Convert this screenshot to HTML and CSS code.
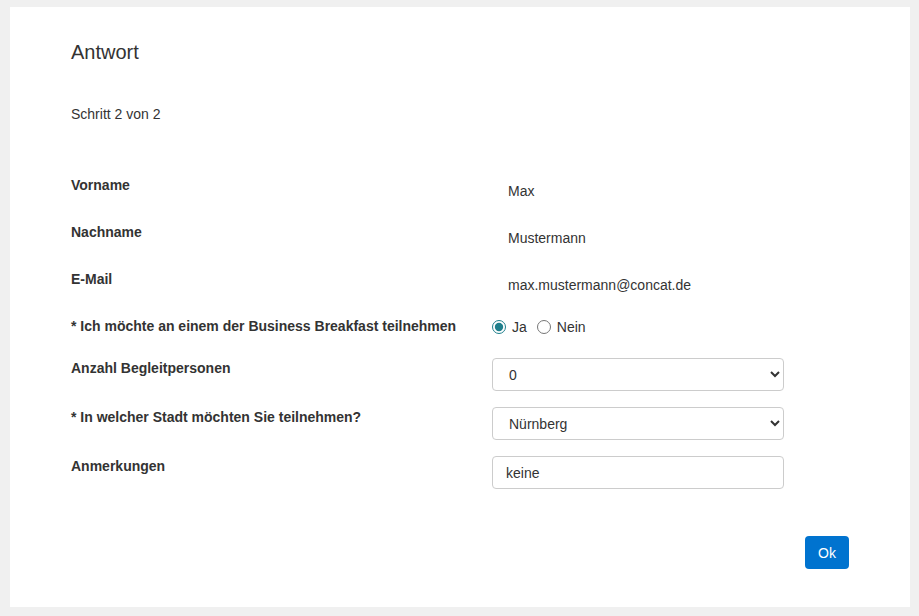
FILE: index.html
```html
<!DOCTYPE html>
<html lang="de">
<head>
    <meta charset="UTF-8">
    <meta name="viewport" content="width=device-width, initial-scale=1.0">
    <title>Antwort</title>
    <link rel="stylesheet" href="styles.css">
</head>
<body>
    <div class="panel">
        <h1>Antwort</h1>
        <p class="step">Schritt 2 von 2</p>

        <form class="answer-form">
            <div class="row">
                <div class="label">Vorname</div>
                <div class="value">Max</div>
            </div>
            <div class="row">
                <div class="label">Nachname</div>
                <div class="value">Mustermann</div>
            </div>
            <div class="row">
                <div class="label">E-Mail</div>
                <div class="value">max.mustermann@concat.de</div>
            </div>
            <div class="row row-radio">
                <div class="label">* Ich möchte an einem der Business Breakfast teilnehmen</div>
                <div class="radios">
                    <label><input type="radio" name="teilnahme" checked> Ja</label>
                    <label><input type="radio" name="teilnahme"> Nein</label>
                </div>
            </div>
            <div class="row row-field">
                <div class="label">Anzahl Begleitpersonen</div>
                <select class="field">
                    <option>0</option>
                    <option>1</option>
                    <option>2</option>
                </select>
            </div>
            <div class="row row-field">
                <div class="label">* In welcher Stadt möchten Sie teilnehmen?</div>
                <select class="field">
                    <option>Nürnberg</option>
                    <option>München</option>
                </select>
            </div>
            <div class="row row-field">
                <div class="label">Anmerkungen</div>
                <input class="field text-field" type="text" value="keine">
            </div>

            <div class="actions">
                <button type="button" class="ok-btn">Ok</button>
            </div>
        </form>
    </div>
</body>
</html>
```

FILE: styles.css
```css
body {
    margin: 0;
    padding: 7px 10px;
    background: #f0f0f0;
    font-family: "Liberation Sans", Arial, sans-serif;
    font-size: 14px;
    color: #333;
}

.panel {
    width: 900px;
    box-sizing: border-box;
    background: white;
    padding: 33px 61px 38px;
}

h1 {
    margin: 0;
    font-size: 20px;
    font-weight: normal;
    line-height: 24px;
}

.step {
    margin: 40px 0 0;
    line-height: 20px;
}

.answer-form {
    margin-top: 51px;
}

.row {
    display: grid;
    grid-template-columns: 421px 292px;
    align-items: start;
    height: 33px;
    margin-bottom: 14px;
}

.row-radio {
    height: 28px;
}

.row-field {
    margin-bottom: 16px;
}

.label {
    font-weight: bold;
    line-height: 20px;
}

.value {
    padding-left: 16px;
    line-height: 33px;
}

.radios {
    display: flex;
    gap: 10px;
    line-height: 20px;
    padding-top: 1px;
}

.radios label {
    display: flex;
    align-items: center;
    gap: 6px;
}

.radios input {
    margin: 0;
    width: 14px;
    height: 14px;
    accent-color: #1f7f8c;
}

.field {
    width: 292px;
    height: 33px;
    box-sizing: border-box;
    border: 1px solid #ccc;
    border-radius: 4px;
    background: white;
    font-family: inherit;
    font-size: 14px;
    color: #333;
    padding: 0 12px;
}

.text-field {
    padding: 0 13px;
}

.actions {
    display: flex;
    justify-content: flex-end;
    margin-top: 47px;
}

.ok-btn {
    width: 44px;
    height: 33px;
    border: none;
    border-radius: 4px;
    background: #0073cf;
    color: white;
    font-family: inherit;
    font-size: 14px;
    cursor: pointer;
}
```
